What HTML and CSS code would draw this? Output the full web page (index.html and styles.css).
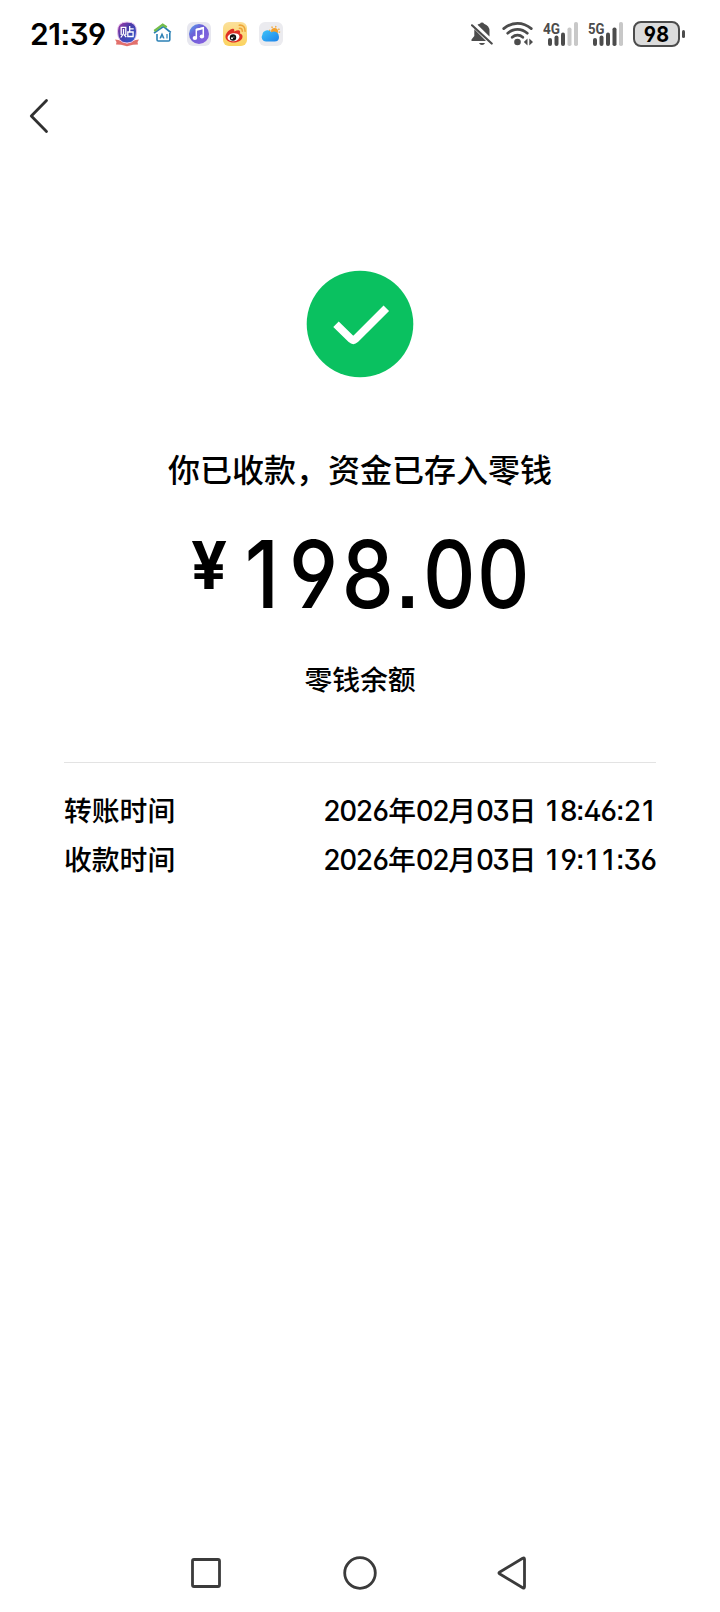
FILE: index.html
```html
<!DOCTYPE html>
<html lang="zh-CN">
<head>
<meta charset="utf-8">
<title>收款详情</title>
<link rel="stylesheet" href="styles.css">
</head>
<body>
<div class="screen">
  <header class="status">
    <div class="status-left">
      <span class="clock">21<i class="sep">:</i>39</span>
      <div class="apps">
        <svg width="24" height="26" viewBox="0 0 24 26">
          <defs><linearGradient id="tie" x1="0" y1="0" x2="1" y2="1"><stop offset="0" stop-color="#b03aa8"/><stop offset=".4" stop-color="#4a3aa8"/><stop offset="1" stop-color="#2f5fd0"/></linearGradient></defs>
          <path d="M0 18.500l3.500.5L12 22.500 20.500 19l3.500-.5-1.500 2.500.5 2.500-5 .3-6 1.500-6-1.500-5-.3.5-2.500z" fill="#e2706c"/>
          <path d="M2.500 10Q2.500 1 12 1T21.500 10Q21.500 22 12 22T2.500 10z" fill="url(#tie)" stroke="#e9c4ee" stroke-width="1"/>
          <g fill="none" stroke="#fff" stroke-width="1.300"><path d="M6.200 14V6.300h4.600V14M8.500 8v4.500L5.800 16.500M9 13.500l2.200 2.700M14.700 5v6M14.700 7.800h4M12.800 11h5.300v4.500h-5.300z"/></g>
        </svg>
        <svg width="24" height="26" viewBox="0 0 24 26">
          <path d="M6 13v5.700q0 1.300 1.300 1.300h10.200q1.300 0 1.300-1.300V12" fill="none" stroke="#2b80b5" stroke-width="1.600"/>
          <path d="M3 12l5-3.500 4.500-3 7.300 6" fill="none" stroke="#2b80b5" stroke-width="1.700"/>
          <path d="M3.300 10l8.400-6.300 4 2.500" fill="none" stroke="#74bd4b" stroke-width="2.200"/>
          <path d="M9 17.500l2-4.500 2 4.500M10 16h2.200M16 13v4.500" fill="none" stroke="#2b80b5" stroke-width="1.200"/>
        </svg>
        <svg width="24" height="26" viewBox="0 0 24 26">
          <defs><linearGradient id="mus" x1="0" y1="0" x2="1" y2="1"><stop offset="0" stop-color="#55a8f0"/><stop offset=".35" stop-color="#6b62d8"/><stop offset="1" stop-color="#8b5fe0"/></linearGradient></defs>
          <rect y="1" width="24" height="24" rx="6" fill="#e7e7ef"/><circle cx="12" cy="13" r="10" fill="url(#mus)"/>
          <path d="M9.300 17V8.500l7-1.700v8.700" fill="none" stroke="#fff" stroke-width="1.500"/><path d="M9 7.800l8-1.900v2.200L9 10z" fill="#fff"/>
          <ellipse cx="7.900" cy="17" rx="2.300" ry="1.900" fill="#fff"/><ellipse cx="14.900" cy="15.500" rx="2.200" ry="1.900" fill="#fff"/>
        </svg>
        <svg width="24" height="26" viewBox="0 0 24 26">
          <defs><linearGradient id="wb" x1="0" y1="0" x2="0" y2="1"><stop offset="0" stop-color="#fbe09a"/><stop offset="1" stop-color="#fbd35f"/></linearGradient></defs>
          <rect y="1" width="24" height="24" rx="6" fill="url(#wb)"/>
          <path d="M2.500 15C3 11 8.500 6.500 10.800 8q1 .8.300 2.500Q16 8.300 17 10.200q.5 1-.2 2.300 3 .8 2.700 3.500C19 20 14 21.500 10.500 21.500 6 21.500 2 19 2.500 15z" fill="#df2f25"/>
          <ellipse cx="10.500" cy="16.200" rx="6" ry="4" fill="#fff" transform="rotate(-8 10.500 16.200)"/>
          <circle cx="10" cy="16.500" r="3.200" fill="#111"/><circle cx="9" cy="17.300" r="1" fill="#fff"/><circle cx="10.900" cy="15.900" r=".5" fill="#fff"/>
          <path d="M16.500 7.300q2.800-.3 2.800 3M16.200 4.200q6-.5 5.900 6" fill="none" stroke="#eea53a" stroke-width="1.600" stroke-linecap="round"/>
        </svg>
        <svg width="24" height="26" viewBox="0 0 24 26">
          <defs><linearGradient id="wea" x1="0" y1="0" x2="1" y2="1"><stop offset="0" stop-color="#3fc4f8"/><stop offset="1" stop-color="#1b82ea"/></linearGradient></defs>
          <rect y="1" width="24" height="24" rx="6" fill="#ebebef"/>
          <circle cx="15.500" cy="10.500" r="4.900" fill="none" stroke="#f3b04a" stroke-width="1.600" stroke-dasharray="1.400 2.450"/>
          <circle cx="15.500" cy="10.500" r="3.500" fill="#f2a02c"/>
          <path d="M7 20.500a4.300 4.300 0 0 1-3.600-6.700 5 5 0 0 1 9-2.600 5 5 0 0 1 7.600 4.800q0 4.500-4.500 4.500z" fill="url(#wea)"/>
        </svg>
      </div>
    </div>
    <div class="status-right">
      <svg width="22" height="26" viewBox="0 0 22 26">
        <path d="M6.500 3.700Q7.800 2.900 9 2.700q.5-1.200 2-1.200t2 1.200q5.500 1.800 5.500 7.300v5.500zM3.300 8.200L15 20H.5v-1.500L3.300 15z" fill="#4c4c4c"/>
        <path d="M8 22h6q-.8 2-3 2t-3-2z" fill="#4c4c4c"/>
        <path d="M1 4.300L20.700 22.500" stroke="#4c4c4c" stroke-width="2.200" stroke-linecap="round"/>
      </svg>
      <svg width="32" height="26" viewBox="0 0 32 26">
        <g fill="none" stroke="#4c4c4c" stroke-width="2.700" stroke-linecap="round"><path d="M1.700 7.600Q8 2.300 15.500 2.300T29.300 7.600M5.700 12.200Q10 8.300 15.500 8.300T25.300 12.200M10.200 16.300Q12.500 14.200 15.500 14.200T20.800 16.300"/></g>
        <circle cx="15.500" cy="21" r="3.300" fill="#4c4c4c"/><path d="M25.500 17.600v6.800L21.800 21zM27.300 17.600v6.800L31 21z" fill="#4c4c4c"/>
      </svg>
      <svg class="signal" width="36" height="26" viewBox="0 0 36 26">
        <text x="0" y="12.700" textLength="17" lengthAdjust="spacingAndGlyphs">4G</text>
        <g fill="#4c4c4c"><rect x="5" y="17" width="4" height="8" rx="2"/><rect x="11.500" y="14.500" width="4" height="10.500" rx="2"/><rect x="18" y="11.500" width="4" height="13.500" rx="2"/></g>
        <g fill="#c8c8c8"><rect x="24.500" y="6.500" width="4" height="18.500" rx="1.800"/><rect x="31" y="1" width="4" height="24" rx="1.800"/></g>
      </svg>
      <svg class="signal" width="36" height="26" viewBox="0 0 36 26">
        <text x="0" y="12.700" textLength="16.500" lengthAdjust="spacingAndGlyphs">5G</text>
        <g fill="#4c4c4c"><rect x="5" y="17" width="4" height="8" rx="2"/><rect x="11.500" y="14.500" width="4" height="10.500" rx="2"/><rect x="18" y="11.500" width="4" height="13.500" rx="2"/><rect x="24.500" y="6.500" width="4" height="18.500" rx="1.800"/></g>
        <rect x="31" y="1" width="4" height="24" rx="1.800" fill="#c8c8c8"/>
      </svg>
      <div class="battery"><span class="battery-body"><b>98</b></span><i class="battery-tip"></i></div>
    </div>
  </header>

  <nav class="topbar">
    <svg width="20" height="36" viewBox="0 0 20 36"><path d="M17.500 2.500L2.300 18 17.500 33.500" fill="none" stroke="#303030" stroke-width="2.800" stroke-linecap="round" stroke-linejoin="round"/></svg>
  </nav>

  <main class="result">
    <svg class="badge" width="108" height="108" viewBox="0 0 108 108">
      <circle cx="54" cy="54" r="53.300" fill="#0ac160"/>
      <path d="M30 54.200L45.300 69.200Q47.300 71 49.300 69.200L80.300 38.200" fill="none" stroke="#fff" stroke-width="7.800"/>
    </svg>
    <h1 class="title">你已收款，资金已存入零钱</h1>
    <div class="amount"><span class="yen">¥</span><span class="digits"><i class="one">1</i>98<i class="sep">.</i>00</span></div>
    <div class="source">零钱余额</div>
    <dl class="details">
      <div class="row"><dt>转账时间</dt><dd><span>2026</span>年<span>02</span>月<span>03</span>日 <span><i class="one">1</i>8<i class="sep">:</i>46<i class="sep">:</i>2<i class="one">1</i></span></dd></div>
      <div class="row"><dt>收款时间</dt><dd><span>2026</span>年<span>02</span>月<span>03</span>日 <span><i class="one">1</i>9<i class="sep">:</i><i class="one">1</i><i class="one">1</i><i class="sep">:</i>36</span></dd></div>
    </dl>
  </main>

  <footer class="navbar">
    <svg width="34" height="34" viewBox="0 0 34 34"><rect x="3.500" y="3.500" width="27" height="27" rx="1.500"/></svg>
    <svg width="34" height="34" viewBox="0 0 34 34"><circle cx="17" cy="17" r="15.300"/></svg>
    <svg width="34" height="34" viewBox="0 0 34 34"><path d="M2.500 16.200L25.700 2.300Q27.500 1.300 27.500 3.300V30.700Q27.500 32.700 25.700 31.700L2.500 17.800Q1.300 17 2.500 16.200z"/></svg>
  </footer>
</div>
</body>
</html>
```
FILE: styles.css
```css
* { box-sizing: border-box; }
body { margin: 0; background: #fff; }
.screen {
  width: 720px;
  height: 1612px;
  display: flex;
  flex-direction: column;
  color: #000;
  font-family: Inter, "Noto Sans CJK SC", sans-serif;
  font-feature-settings: "ss01", "ss07", "tnum";
}
svg { display: block; flex: none; }
.sep, .one { font-style: normal; font-feature-settings: "ss01", "ss07"; }
.one { display: inline-block; text-align: right; }

.status {
  height: 68px;
  padding: 0 35px 0 30px;
  display: flex;
  justify-content: space-between;
  align-items: center;
}
.status-left, .status-right, .apps { display: flex; align-items: center; }
.clock {
  width: 85px;
  font-size: 30px;
  font-weight: 600;
  line-height: 36px;
  letter-spacing: -0.500px;
  font-feature-settings: "ss01", "ss07";
}
.apps { gap: 12px; }
.status-right { gap: 9px; }
.signal text { font: 700 15.500px Roboto, sans-serif; fill: #4c4c4c; }
.battery { display: flex; align-items: center; gap: 2px; }
.battery-body {
  width: 47px;
  height: 26px;
  border: 2px solid #4c4c4c;
  border-radius: 8px;
  background: #dcdcdc;
  font-size: 22px;
  line-height: 22px;
  text-align: center;
}
.battery-body b { display: inline-block; transform: scaleX(.9); }
.battery-tip { width: 3px; height: 8px; border-radius: 1.500px; background: #4c4c4c; }

.topbar { height: 96px; padding: 30px 29px; }

.result {
  flex: 1;
  padding: 106px 64px 0;
  display: flex;
  flex-direction: column;
  align-items: center;
}
.title { margin: 69px 0 0; font-size: 32px; font-weight: 450; line-height: 48px; }
.amount {
  width: 338px;
  height: 100px;
  margin-top: 29px;
  display: flex;
  align-items: flex-start;
}
.yen {
  flex: none;
  width: 42px;
  padding-top: 8px;
  font-size: 66px;
  line-height: 66px;
  font-weight: 650;
  transform: scaleX(.96);
  transform-origin: left;
}
.digits {
  flex: none;
  font-size: 94px;
  line-height: 100px;
  font-weight: 540;
  letter-spacing: .700px;
  transform: scaleX(.88);
  transform-origin: left;
}
.digits .one { width: 61px; padding-right: 8px; }
.digits .sep { letter-spacing: 2.500px; }
.source { margin-top: 32px; font-size: 27.800px; font-weight: 450; line-height: 48px; }
.details {
  width: 592px;
  margin: 58px 0 0;
  padding-top: 24px;
  border-top: 1px solid #e3e3e3;
}
.row {
  display: flex;
  justify-content: space-between;
  height: 49px;
  font-size: 27.800px;
  font-weight: 500;
  line-height: 49px;
}
.row dd { margin: 0; white-space: nowrap; letter-spacing: -0.150px; }
.row dd span { letter-spacing: -1.750px; }
.row .one { width: 16.300px; padding-right: 4px; }
.row .sep { position: relative; top: -1px; letter-spacing: -1px; }

.navbar {
  height: 78px;
  padding: 0 189px;
  display: flex;
  justify-content: space-between;
  align-items: center;
}
.navbar svg { fill: none; stroke: #3b3b3b; stroke-width: 2.800; stroke-linejoin: round; }
```
